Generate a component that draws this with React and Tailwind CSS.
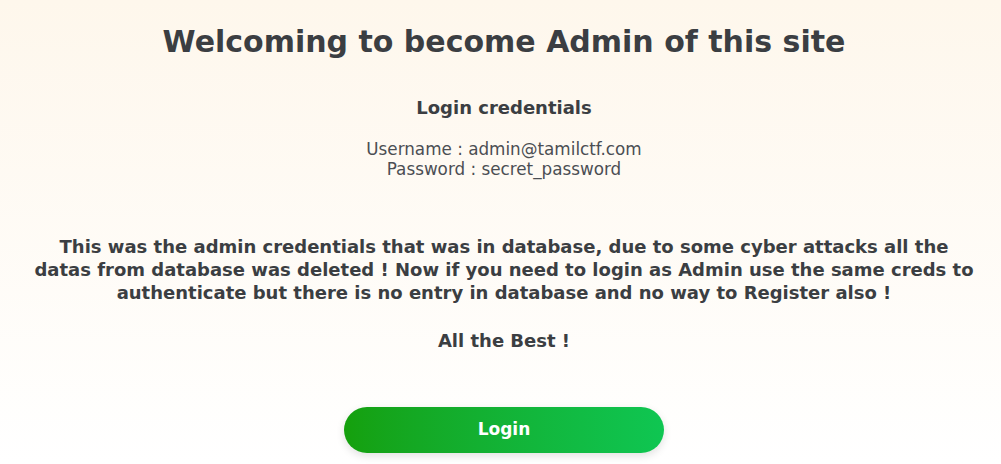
export default function App() {
  return (
    <div className="min-h-[464px] w-full bg-gradient-to-b from-[#fef7ec] to-[#ffffff] font-['DejaVu_Sans',sans-serif] text-[#3b3e42]">
      <div className="flex flex-col items-center text-center pt-[22px] pl-[7px]">
        <h1 className="text-[30px] leading-[40px] font-bold">
          Welcoming to become Admin of this site
        </h1>

        <h2 className="mt-[34px] text-[18px] leading-[24px] font-bold">Login credentials</h2>

        <div className="mt-[19px] text-[16.8px] leading-[20px] font-normal text-[#4b4e53]">
          <p>Username : admin@tamilctf.com</p>
          <p>Password : secret_password</p>
        </div>

        <p className="mt-[56px] text-[18px] leading-[23px] font-bold">
          This was the admin credentials that was in database, due to some cyber attacks all the
          <br />
          datas from database was deleted ! Now if you need to login as Admin use the same creds to
          <br />
          authenticate but there is no entry in database and no way to Register also !
        </p>

        <p className="mt-[25px] text-[18px] leading-[23px] font-bold">All the Best !</p>

        <button className="mt-[55px] w-[320px] h-[46px] rounded-full bg-gradient-to-r from-[#15a00c] to-[#0fc652] text-white text-[17px] font-bold shadow-[0_3px_8px_rgba(0,0,0,0.12)]">
          Login
        </button>
      </div>
    </div>
  )
}
